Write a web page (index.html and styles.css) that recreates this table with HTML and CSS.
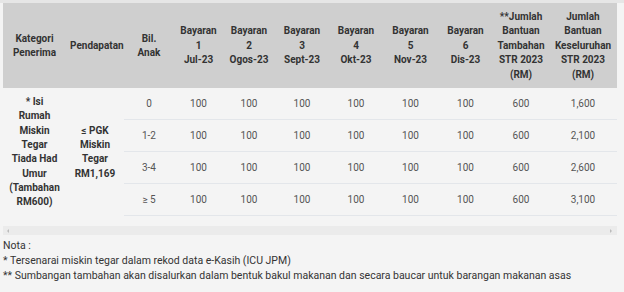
FILE: index.html
```html
<!DOCTYPE html>
<html>
<head>
<meta charset="utf-8">
<link rel="stylesheet" href="styles.css">
</head>
<body>
<div class="wrap">
  <table class="str">
    <colgroup>
      <col class="w1"><col class="w2"><col class="w3"><col class="w4"><col class="w5"><col class="w6"><col class="w7"><col class="w8"><col class="w9"><col class="w10"><col class="w11">
    </colgroup>
    <thead>
      <tr>
        <th>Kategori Penerima</th>
        <th>Pendapatan</th>
        <th class="narrow">Bil. Anak</th>
        <th>Bayaran<br>1<br>Jul-23</th>
        <th>Bayaran<br>2<br>Ogos-23</th>
        <th>Bayaran<br>3<br>Sept-23</th>
        <th>Bayaran<br>4<br>Okt-23</th>
        <th>Bayaran<br>5<br>Nov-23</th>
        <th>Bayaran<br>6<br>Dis-23</th>
        <th>**Jumlah Bantuan Tambahan STR 2023 (RM)</th>
        <th>Jumlah Bantuan Keseluruhan STR 2023 (RM)</th>
      </tr>
    </thead>
    <tbody>
      <tr>
        <td rowspan="4" class="cat">* Isi Rumah Miskin Tegar Tiada Had Umur (Tambahan RM600)</td>
        <td rowspan="4" class="cat">≤ PGK Miskin Tegar RM1,169</td>
        <td>0</td><td>100</td><td>100</td><td>100</td><td>100</td><td>100</td><td>100</td><td>600</td><td>1,600</td>
      </tr>
      <tr>
        <td>1-2</td><td>100</td><td>100</td><td>100</td><td>100</td><td>100</td><td>100</td><td>600</td><td>2,100</td>
      </tr>
      <tr>
        <td>3-4</td><td>100</td><td>100</td><td>100</td><td>100</td><td>100</td><td>100</td><td>600</td><td>2,600</td>
      </tr>
      <tr>
        <td>≥ 5</td><td>100</td><td>100</td><td>100</td><td>100</td><td>100</td><td>100</td><td>600</td><td>3,100</td>
      </tr>
    </tbody>
  </table>
  <div class="scrollbar">
    <span class="arrow left"></span>
    <span class="arrow right"></span>
  </div>
</div>
<div class="notes">
  <p>Nota :</p>
  <p>* Tersenarai miskin tegar dalam rekod data e-Kasih (ICU JPM)</p>
  <p>** Sumbangan tambahan akan disalurkan dalam bentuk bakul makanan dan secara baucar untuk barangan makanan asas</p>
</div>
</body>
</html>
```

FILE: styles.css
```css
html, body {
  margin: 0;
  padding: 0;
  background: #f4f4f4;
}
body {
  font-family: Roboto, "Liberation Sans", Arial, sans-serif;
  color: #444;
  width: 624px;
  height: 292px;
  overflow: hidden;
}
.wrap {
  padding: 3px 7px 0 3px;
  background: linear-gradient(#e6e6e6 0, #e6e6e6 3px, transparent 3px);
}
.str {
  width: 614px;
  border-collapse: collapse;
  table-layout: fixed;
  font-size: 10px;
}
.w1 { width: 63px; }
.w2 { width: 58px; }
.w3 { width: 50px; }
.w4 { width: 49px; }
.w5 { width: 52px; }
.w6 { width: 54px; }
.w7 { width: 54px; }
.w8 { width: 55px; }
.w9 { width: 55px; }
.w10 { width: 56px; }
.w11 { width: 68px; }
.str th {
  background: #cfcfcf;
  color: #333;
  font-weight: 700;
  line-height: 14.5px;
  padding: 6px 4px 5px;
  text-align: center;
  vertical-align: middle;
  height: 74px;
}
.str th.narrow {
  padding-left: 8px;
  padding-right: 8px;
}
.str td {
  text-align: center;
  vertical-align: middle;
  color: #555;
  height: 30px;
  padding: 1px 4px 0;
  border-bottom: 1px solid #e3e6ea;
  line-height: 14.3px;
}
.str td.cat {
  font-weight: 700;
  color: #333;
  border-bottom: none;
  padding: 1px 6px 0;
}
.scrollbar {
  margin-top: 10px;
  height: 9px;
  background: #ebebeb;
  width: 614px;
  display: flex;
  align-items: center;
  justify-content: space-between;
  padding: 0 5px 0 4px;
  box-sizing: border-box;
}
.arrow {
  width: 0;
  height: 0;
  border-top: 2px solid transparent;
  border-bottom: 2px solid transparent;
}
.arrow.left { border-right: 2px solid #bbb; }
.arrow.right { border-left: 2px solid #bbb; }
.notes {
  padding: 3px 3px 0;
  font-size: 10.5px;
  color: #333;
  font-family: Roboto, "Liberation Sans", Arial, sans-serif;
}
.notes p {
  margin: 0;
  line-height: 15px;
}
```
